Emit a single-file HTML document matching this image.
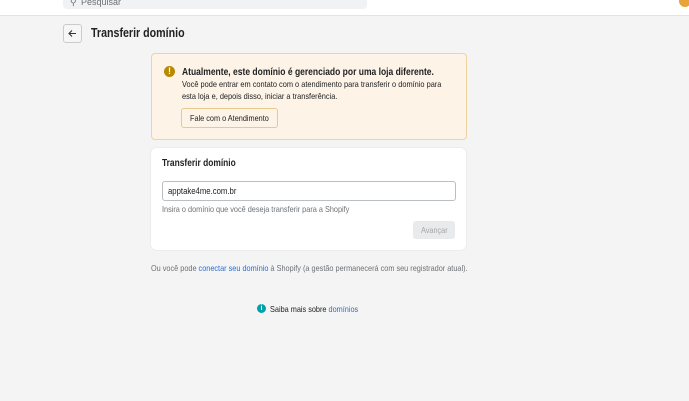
<!DOCTYPE html><html><head><style>
body{margin:0;width:689px;height:401px;background:#f4f4f4;font-family:"Liberation Sans",sans-serif;position:relative;overflow:hidden;color:#202223}
.a{position:absolute}
.s{transform:scaleX(0.86);transform-origin:0 0;white-space:nowrap}
</style></head><body>
<div class="a" style="left:0;top:0;width:689px;height:15px;background:#fff;border-bottom:1px solid #e1e3e5"></div>
<div class="a" style="left:63px;top:-4px;width:304px;height:13px;background:#f1f2f3;border-radius:4px;font-size:9px;color:#6d7175"><span style="position:absolute;left:7px;top:1px">&#9906;</span><span style="position:absolute;left:18px;top:1px">Pesquisar</span></div>
<div class="a" style="left:679px;top:-5px;width:12px;height:12px;border-radius:50%;background:#e8a33a"></div>
<div class="a" style="left:63px;top:24px;width:17px;height:17px;border:1px solid #c9cccf;border-radius:3px;background:#f6f6f7"><svg width="17" height="17" viewBox="0 0 17 17" style="position:absolute;left:0;top:0"><path d="M12 8.5H5M8 5.5L5 8.5 8 11.5" stroke="#333" stroke-width="1.1" fill="none"/></svg></div>
<div class="a s" style="left:91px;top:25px;font-size:13px;font-weight:bold;transform:scaleX(0.82)">Transferir domínio</div>
<div class="a" style="left:151px;top:53px;width:314px;height:85px;background:#fdf3e7;border:1px solid #f0d3a0;border-radius:4px"></div>
<div class="a" style="left:164px;top:66px;width:11px;height:11px;border-radius:50%;background:#b98900;color:#fff;font-size:9px;font-weight:bold;text-align:center;line-height:11px">!</div>
<div class="a s" style="left:182px;top:66px;font-size:10.5px;font-weight:bold;transform:scaleX(0.81)">Atualmente, este domínio é gerenciado por uma loja diferente.</div>
<div class="a s" style="left:182px;top:78px;font-size:8.5px;line-height:12px;transform:scaleX(0.87)">Você pode entrar em contato com o atendimento para transferir o domínio para<br>esta loja e, depois disso, iniciar a transferência.</div>
<div class="a" style="left:181px;top:108px;width:95px;height:18px;border:1px solid #e9c88e;border-radius:3px;background:#fdf3e7;font-size:8.5px;line-height:18px"><span class="a s" style="left:8px;top:0">Fale com o Atendimento</span></div>
<div class="a" style="left:151px;top:148px;width:315px;height:102px;background:#fff;border-radius:5px;box-shadow:0 0 1px rgba(0,0,0,.2)"></div>
<div class="a s" style="left:162px;top:158px;font-size:10px;font-weight:bold;transform:scaleX(0.84)">Transferir domínio</div>
<div class="a" style="left:162px;top:181px;width:292px;height:18px;border:1px solid #babfc3;border-radius:3px;font-size:9px;line-height:18px"><span class="a s" style="left:5px;top:0">apptake4me.com.br</span></div>
<div class="a s" style="left:162px;top:204px;font-size:8.5px;color:#6d7175">Insira o domínio que você deseja transferir para a Shopify</div>
<div class="a" style="left:413px;top:221px;width:42px;height:18px;border-radius:3px;background:#e9eaeb;color:#a3a6a9;font-size:8.5px;line-height:18px"><span class="a s" style="left:8px;top:0">Avançar</span></div>
<div class="a s" style="left:151px;top:263px;font-size:8.5px;color:#6d7175">Ou você pode <span style="color:#2c6ecb">conectar seu domínio</span> à Shopify (a gestão permanecerá com seu registrador atual).</div>
<div class="a" style="left:257px;top:304px;width:9px;height:9px;border-radius:50%;background:#00a0ac;color:#fff;font-size:7px;font-weight:bold;text-align:center;line-height:9px">i</div>
<div class="a s" style="left:270px;top:304px;font-size:8.5px;color:#202223">Saiba mais sobre <span style="color:#2c6ecb">domínios</span></div>
</body></html>
